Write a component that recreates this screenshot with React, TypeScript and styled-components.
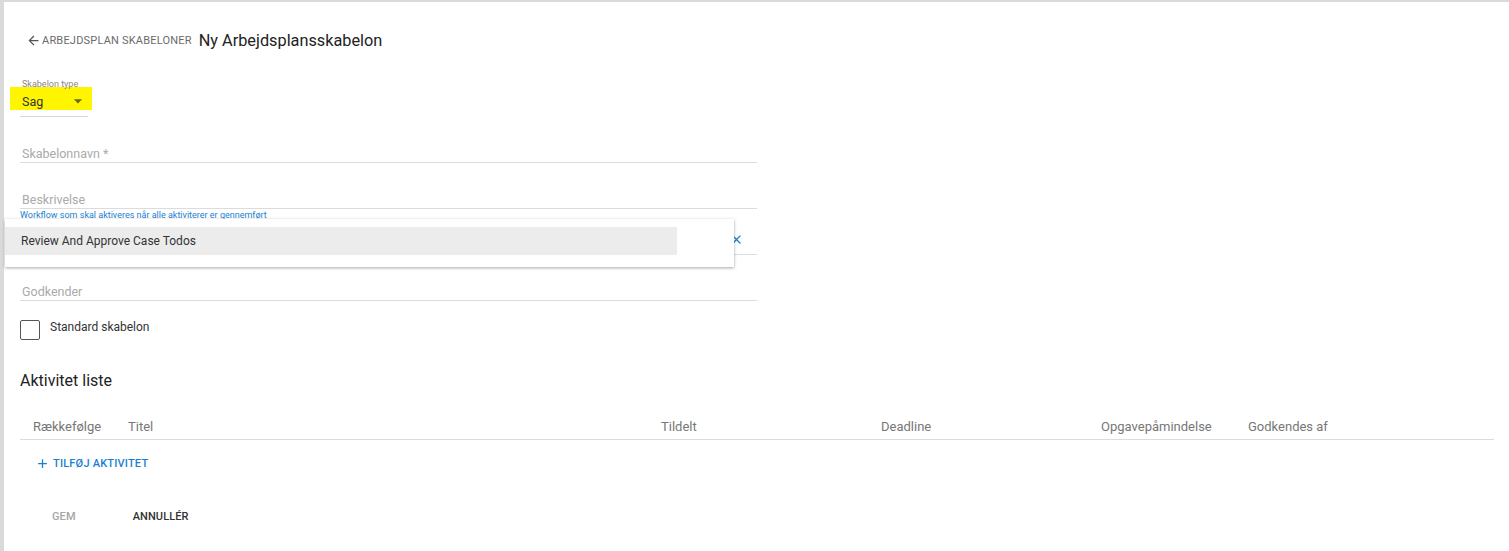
import React from 'react'
import styled, { createGlobalStyle } from 'styled-components'
import { MdArrowBack, MdClose, MdAdd, MdArrowDropDown } from 'react-icons/md'

const GlobalStyle = createGlobalStyle`
    html, body {
        margin: 0;
        padding: 0;
        background: #dadada;
        font-family: Roboto, "Liberation Sans", Arial, sans-serif;
    }
    #root {
        padding: 2px 0 0 4px;
    }
`

const Page = styled.div`
    background: #fff;
    min-height: 549px;
    padding: 0 15px 0 16px;
    box-sizing: border-box;
`

const Header = styled.div`
    display: flex;
    align-items: center;
    height: 22px;
    padding-top: 27px;
    padding-left: 6px;
`
const BackLink = styled.a`
    display: flex;
    align-items: center;
    color: #6b6b6b;
    font-size: 11px;
    letter-spacing: 0.2px;
    text-transform: uppercase;
    text-decoration: none;
    margin-right: 7px;

    svg {
        font-size: 15px;
        margin-right: 1px;
        color: #555;
    }
`
const Title = styled.h1`
    margin: 0;
    font-size: 16.3px;
    font-weight: 400;
    color: #222;
`

const Form = styled.div`
    width: 737px;
`

const SelectWrap = styled.div`
    margin-top: 28px;
    width: 68px;
`
const SmallLabel = styled.div<{ $color?: string }>`
    font-size: 9px;
    line-height: 10px;
    color: ${p => p.$color || '#888'};
    padding-left: 2px;
    white-space: nowrap;
`
const TypeLabel = styled(SmallLabel)`
    position: relative;
    margin-bottom: -2px;
    z-index: 1;
`
const SelectValue = styled.div`
    display: flex;
    align-items: center;
    justify-content: space-between;
    height: 23px;
    width: 82px;
    margin-left: -10px;
    padding: 5px 4px 0 12px;
    box-sizing: border-box;
    background: #fff500;
    font-size: 12.5px;
    color: #333;

    svg {
        font-size: 20px;
        color: #6b6a10;
    }
`
const SelectLine = styled.div`
    height: 1px;
    background: #d8d8d8;
    margin-top: 6px;
`

const Field = styled.div`
    position: relative;
    height: 46px;
    border-bottom: 1px solid #dcdcdc;
    display: flex;
    flex-direction: column;
    justify-content: flex-end;
    padding: 0 0 1px 2px;
    box-sizing: border-box;
`
const Placeholder = styled.span`
    font-size: 12.5px;
    color: #aaa;
`
const FieldLabel = styled(SmallLabel)`
    position: absolute;
    top: 1px;
    left: 0;
    padding-left: 0;
`
const ClearButton = styled.button`
    position: absolute;
    right: 13px;
    top: 23px;
    border: 0;
    background: none;
    padding: 0;
    display: flex;
    color: #1b7fd0;
    font-size: 15px;
`
const Menu = styled.div`
    position: absolute;
    top: 10px;
    left: -15px;
    width: 729px;
    height: 48px;
    background: #fff;
    box-shadow: 0 1px 3px rgba(0, 0, 0, 0.35);
    padding-top: 8px;
    box-sizing: border-box;
    z-index: 2;
`
const MenuItem = styled.div<{ $active?: boolean }>`
    width: 672px;
    height: 28px;
    display: flex;
    align-items: center;
    padding-left: 16px;
    box-sizing: border-box;
    background: ${p => (p.$active ? '#ececec' : 'transparent')};
    font-size: 12px;
    color: #333;
`

const CheckRow = styled.label`
    display: flex;
    align-items: flex-start;
    margin-top: 19px;
    font-size: 12px;
    color: #333;
`
const Box = styled.span`
    width: 18px;
    height: 18px;
    border: 1px solid #555;
    border-radius: 2px;
    margin-right: 10px;
`
const CheckText = styled.span`
    line-height: 15px;
`

const SectionTitle = styled.h2`
    margin: 31px 0 0;
    font-size: 16px;
    font-weight: 400;
    color: #222;
    line-height: 20px;
`

const TableHead = styled.div`
    display: grid;
    grid-template-columns: 95px 533px 220px 220px 147px 1fr;
    margin-top: 28px;
    padding: 0 0 5px 13px;
    border-bottom: 1px solid #dcdcdc;
    font-size: 13px;
    color: #777;
    line-height: 15px;
`

const AddButton = styled.button`
    display: flex;
    align-items: center;
    border: 0;
    background: none;
    margin: 16px 0 0 15px;
    padding: 0;
    color: #1b7fd0;
    font-family: inherit;
    font-size: 11px;
    font-weight: 500;
    letter-spacing: 0.2px;

    svg {
        font-size: 15px;
        margin-right: 3px;
    }
`

const Actions = styled.div`
    display: flex;
    margin-top: 39px;
    padding-left: 32px;
`
const TextButton = styled.button<{ $disabled?: boolean }>`
    border: 0;
    background: none;
    padding: 0;
    margin-right: 57px;
    font-family: inherit;
    font-size: 11px;
    font-weight: 500;
    letter-spacing: 0.1px;
    color: ${p => (p.$disabled ? '#a6a6a6' : '#333')};
`

const columns = ['Rækkefølge', 'Titel', 'Tildelt', 'Deadline', 'Opgavepåmindelse', 'Godkendes af']

const App = () => {
    return (
        <>
            <GlobalStyle />
            <Page>
                <Header>
                    <BackLink href="#">
                        <MdArrowBack />
                        Arbejdsplan skabeloner
                    </BackLink>
                    <Title>Ny Arbejdsplansskabelon</Title>
                </Header>

                <Form>
                    <SelectWrap>
                        <TypeLabel>Skabelon type</TypeLabel>
                        <SelectValue>
                            Sag
                            <MdArrowDropDown />
                        </SelectValue>
                        <SelectLine />
                    </SelectWrap>

                    <Field>
                        <Placeholder>Skabelonnavn *</Placeholder>
                    </Field>
                    <Field>
                        <Placeholder>Beskrivelse</Placeholder>
                    </Field>
                    <Field>
                        <FieldLabel $color="#1b7fd0">Workflow som skal aktiveres når alle aktiviterer er gennemført</FieldLabel>
                        <ClearButton>
                            <MdClose />
                        </ClearButton>
                        <Menu>
                            <MenuItem $active>Review And Approve Case Todos</MenuItem>
                        </Menu>
                    </Field>
                    <Field>
                        <Placeholder>Godkender</Placeholder>
                    </Field>

                    <CheckRow>
                        <Box />
                        <CheckText>Standard skabelon</CheckText>
                    </CheckRow>
                </Form>

                <SectionTitle>Aktivitet liste</SectionTitle>
                <TableHead>
                    {columns.map(c => (
                        <span key={c}>{c}</span>
                    ))}
                </TableHead>
                <AddButton>
                    <MdAdd />
                    TILFØJ AKTIVITET
                </AddButton>

                <Actions>
                    <TextButton $disabled>GEM</TextButton>
                    <TextButton>ANNULLÉR</TextButton>
                </Actions>
            </Page>
        </>
    )
}

export default App
